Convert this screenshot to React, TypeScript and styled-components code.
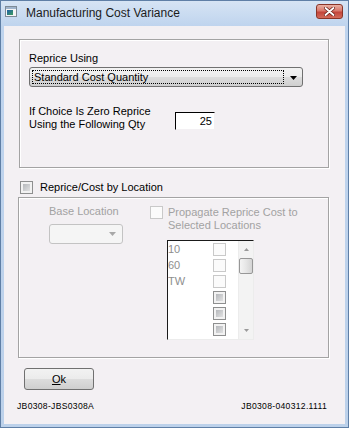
import styled, { createGlobalStyle } from 'styled-components';

const GlobalStyle = createGlobalStyle`
  html, body { margin: 0; padding: 0; background: #ffffff; }
  body { font-family: "Liberation Sans", Arial, sans-serif; font-size: 11px; color: #000; }
  * { box-sizing: border-box; }
`;

type BoxKind = 'active' | 'disabled';

const locations = [
    { code: '10', kind: 'disabled' as BoxKind },
    { code: '60', kind: 'disabled' as BoxKind },
    { code: 'TW', kind: 'disabled' as BoxKind },
    { code: '', kind: 'active' as BoxKind },
    { code: '', kind: 'active' as BoxKind },
    { code: '', kind: 'active' as BoxKind },
];

const AppIcon = () => (
    <svg width="12" height="11" viewBox="0 0 12 11">
        <rect x="0.5" y="0.5" width="11" height="10" fill="#f4f4f4" stroke="#7d8a96" />
        <rect x="1" y="1" width="10" height="2" fill="#9fb4cc" />
        <defs>
            <linearGradient id="ig" x1="0" y1="0" x2="1" y2="1">
                <stop offset="0" stopColor="#1f5fa8" />
                <stop offset="1" stopColor="#3c9c5c" />
            </linearGradient>
        </defs>
        <rect x="2" y="4" width="6" height="5" fill="url(#ig)" />
    </svg>
);

const CloseGlyph = () => (
    <svg width="11" height="9" viewBox="0 0 11 9">
        <path d="M1.5 1 L9.5 8 M9.5 1 L1.5 8" stroke="#6b2219" strokeWidth="3.4" strokeLinecap="round" />
        <path d="M1.5 1 L9.5 8 M9.5 1 L1.5 8" stroke="#ffffff" strokeWidth="1.8" strokeLinecap="round" />
    </svg>
);

const DropArrow = ({ color }: { color: string }) => (
    <svg width="7" height="4" viewBox="0 0 7 4">
        <path d="M0 0 H7 L3.5 4 Z" fill={color} />
    </svg>
);

const ScrollArrow = ({ up }: { up?: boolean }) => (
    <svg width="5" height="3" viewBox="0 0 5 3">
        <path d={up ? 'M0 3 H5 L2.5 0 Z' : 'M0 0 H5 L2.5 3 Z'} fill="#9a9a9a" />
    </svg>
);

export default function App() {
    return (
        <>
            <GlobalStyle />
            <Window>
                <TitleBar>
                    <IconSlot>
                        <AppIcon />
                    </IconSlot>
                    <Title>Manufacturing Cost Variance</Title>
                    <CloseButton>
                        <CloseGlyph />
                    </CloseButton>
                </TitleBar>
                <Client>
                    <RepriceGroup>
                        <Label>Reprice Using</Label>
                        <Combo>
                            <ComboText>Standard Cost Quantity</ComboText>
                            <ComboArrow>
                                <DropArrow color="#000" />
                            </ComboArrow>
                        </Combo>
                        <QtyRow>
                            <QtyLabel>
                                If Choice Is Zero Reprice
                                <br />
                                Using the Following Qty
                            </QtyLabel>
                            <QtyInput>25</QtyInput>
                        </QtyRow>
                    </RepriceGroup>

                    <CheckRow>
                        <CheckBox $kind="active" />
                        <Label>Reprice/Cost by Location</Label>
                    </CheckRow>

                    <LocationGroup>
                        <BaseColumn>
                            <DimLabel>Base Location</DimLabel>
                            <DimCombo>
                                <DropArrow color="#a8a8a8" />
                            </DimCombo>
                        </BaseColumn>
                        <PropagateColumn>
                            <PropagateRow>
                                <CheckBox $kind="disabled" />
                                <DimLabel>
                                    Propagate Reprice Cost to
                                    <br />
                                    Selected Locations
                                </DimLabel>
                            </PropagateRow>
                            <ListBox>
                                <ListRows>
                                    {locations.map((loc, i) => (
                                        <ListRow key={i}>
                                            <ListCode>{loc.code}</ListCode>
                                            <CheckBox $kind={loc.kind} />
                                        </ListRow>
                                    ))}
                                </ListRows>
                                <ScrollBar>
                                    <ScrollButton>
                                        <ScrollArrow up />
                                    </ScrollButton>
                                    <Thumb />
                                    <ScrollTrack />
                                    <ScrollButton>
                                        <ScrollArrow />
                                    </ScrollButton>
                                </ScrollBar>
                            </ListBox>
                        </PropagateColumn>
                    </LocationGroup>

                    <OkButton>
                        <u>O</u>k
                    </OkButton>

                    <Footer>
                        <span>JB0308-JBS0308A</span>
                        <span>JB0308-040312.1111</span>
                    </Footer>
                </Client>
            </Window>
        </>
    );
}

const Window = styled.div`
    width: 349px;
    height: 428px;
    display: flex;
    flex-direction: column;
    border: 1px solid #5f7fa6;
    padding: 0 3px 3px;
    background: linear-gradient(#d6e4f4 0px, #bfd4ee 25px, #bcd1ea 100%);
`;

const TitleBar = styled.div`
    height: 25px;
    display: flex;
    align-items: flex-start;
    flex-shrink: 0;
`;

const IconSlot = styled.div`
    margin: 5px 0 0 1px;
    display: flex;
`;

const Title = styled.div`
    margin: 4px 0 0 9px;
    font-size: 12px;
    line-height: 16px;
    color: #1b1b1b;
`;

const CloseButton = styled.div`
    margin: 3px 2px 0 auto;
    width: 27px;
    height: 15px;
    display: flex;
    align-items: center;
    justify-content: center;
    border: 1px solid #8a3427;
    border-radius: 3px;
    background: linear-gradient(#e9b1a3 0%, #d9776a 45%, #c3443a 55%, #d36a5a 100%);
`;

const Client = styled.div`
    flex: 1;
    display: flex;
    flex-direction: column;
    background: #f3f0f3;
`;

const GroupBox = styled.div`
    border: 1px solid #a3a3a3;
    box-shadow: inset 1px 1px 0 #ffffff, 1px 1px 0 #ffffff;
`;

const RepriceGroup = styled(GroupBox)`
    margin: 13px 0 0 15px;
    width: 310px;
    height: 129px;
    padding: 12px 9px 0 9px;
`;

const Label = styled.div`
    line-height: 13px;
    color: #000;
`;

const DimLabel = styled(Label)`
    color: #a2a2a2;
`;

const Combo = styled.div`
    margin-top: 2px;
    width: 274px;
    height: 20px;
    display: flex;
    align-items: center;
    padding: 0 0 0 2px;
    border: 1px solid #707070;
    border-radius: 3px;
    background: linear-gradient(#f2f2f2 0%, #ebebeb 50%, #dddddd 50%, #cfcfcf 100%);
`;

const ComboText = styled.div`
    flex: 1;
    height: 14px;
    line-height: 12px;
    padding-left: 1px;
    border: 1px dotted #000;
`;

const ComboArrow = styled.div`
    width: 18px;
    display: flex;
    justify-content: center;
    padding-top: 1px;
`;

const QtyRow = styled.div`
    margin-top: 18px;
    display: flex;
    align-items: flex-start;
`;

const QtyLabel = styled(Label)`
    width: 146px;
`;

const QtyInput = styled.div`
    margin-top: 7px;
    width: 40px;
    height: 18px;
    padding-right: 2px;
    text-align: right;
    line-height: 16px;
    background: #ffffff;
    border-top: 1px solid #000;
    border-left: 1px solid #000;
    border-right: 1px solid #f3f0f3;
    border-bottom: 1px solid #f3f0f3;
`;

const CheckRow = styled.div`
    margin: 13px 0 0 16px;
    display: flex;
    align-items: center;
    gap: 7px;
`;

const CheckBox = styled.div<{ $kind: BoxKind }>`
    width: 13px;
    height: 13px;
    flex-shrink: 0;
    border: 1px solid ${({ $kind }) => ($kind === 'active' ? '#8e8f8f' : '#c9c9c9')};
    background: ${({ $kind }) =>
        $kind === 'active' ? 'linear-gradient(135deg, #a9acb0, #ededed)' : '#fbfbfb'};
    box-shadow: ${({ $kind }) => ($kind === 'active' ? 'inset 0 0 0 2px #f2f2f2' : 'none')};
`;

const LocationGroup = styled(GroupBox)`
    margin: 3px 0 0 14px;
    width: 311px;
    height: 161px;
    padding: 7px 0 0 30px;
    display: flex;
`;

const BaseColumn = styled.div`
    width: 101px;
    display: flex;
    flex-direction: column;
`;

const DimCombo = styled.div`
    margin-top: 6px;
    width: 74px;
    height: 20px;
    display: flex;
    align-items: center;
    justify-content: flex-end;
    padding-right: 6px;
    border: 1px solid #c3c3c3;
    border-radius: 3px;
    background: #f5f5f5;
`;

const PropagateColumn = styled.div`
    display: flex;
    flex-direction: column;
`;

const PropagateRow = styled.div`
    display: flex;
    align-items: flex-start;
    gap: 5px;
    & > div {
        margin-top: 1px;
    }
`;

const ListBox = styled.div`
    margin: 8px 0 0 17px;
    width: 87px;
    height: 100px;
    display: flex;
    background: #ffffff;
    border-top: 1px solid #1a1a1a;
    border-left: 1px solid #1a1a1a;
    border-right: 1px solid #ececec;
    border-bottom: 1px solid #ececec;
`;

const ListRows = styled.div`
    width: 70px;
    display: flex;
    flex-direction: column;
`;

const ListRow = styled.div`
    height: 16px;
    display: flex;
    align-items: center;
`;

const ListCode = styled.div`
    width: 45px;
    color: #8e8e8e;
    line-height: 13px;
`;

const ScrollBar = styled.div`
    width: 15px;
    display: flex;
    flex-direction: column;
    align-items: center;
    background: #f3f3f3;
    border-left: 1px solid #ececec;
`;

const ScrollButton = styled.div`
    height: 17px;
    width: 100%;
    display: flex;
    align-items: center;
    justify-content: center;
`;

const Thumb = styled.div`
    width: 14px;
    height: 16px;
    border: 1px solid #979797;
    border-radius: 2px;
    background: linear-gradient(90deg, #f4f4f4 0%, #e6e6e6 50%, #d4d4d4 100%);
`;

const ScrollTrack = styled.div`
    flex: 1;
`;

const OkButton = styled.div`
    margin: 10px 0 0 20px;
    width: 70px;
    height: 22px;
    display: flex;
    align-items: center;
    justify-content: center;
    border: 1px solid #707070;
    border-radius: 3px;
    background: linear-gradient(#f2f2f2 0%, #ebebeb 50%, #dddddd 50%, #cfcfcf 100%);
    line-height: 13px;
`;

const Footer = styled.div`
    margin-top: 11px;
    padding: 0 18px 0 13px;
    display: flex;
    justify-content: space-between;
    font-size: 8.6px;
    line-height: 11px;
    letter-spacing: 0.3px;
    color: #000;
`;
